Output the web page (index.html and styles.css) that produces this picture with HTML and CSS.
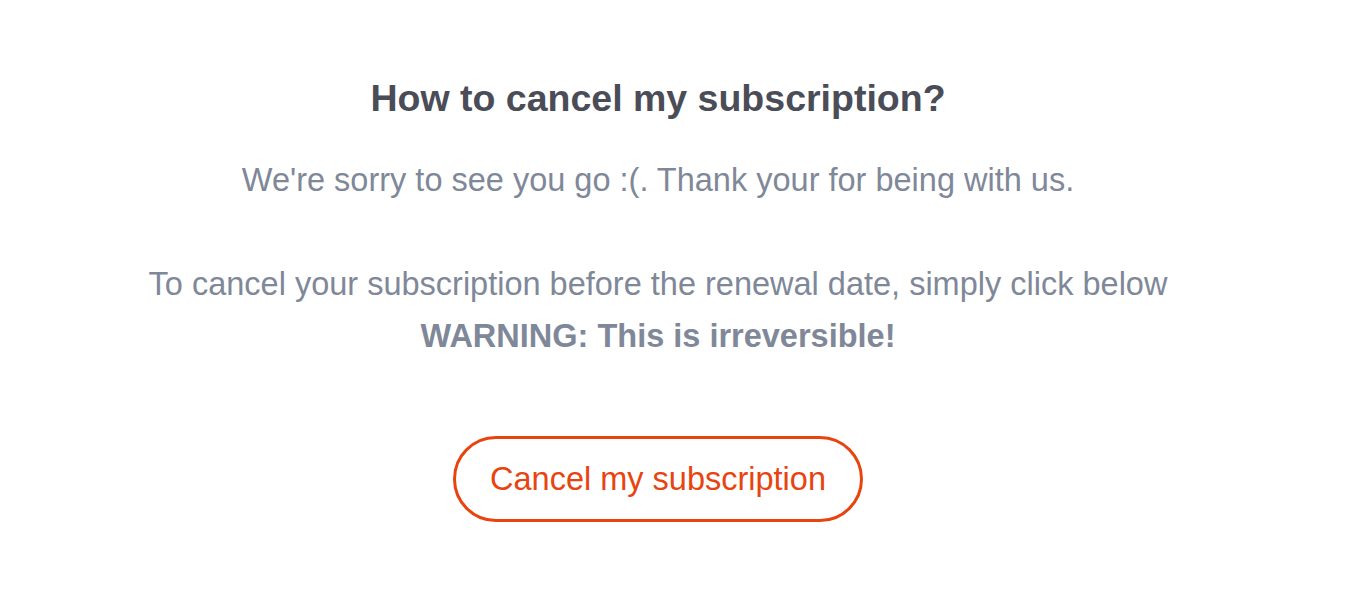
FILE: index.html
```html
<!DOCTYPE html>
<html>
<head>
<meta charset="utf-8">
<link rel="stylesheet" href="styles.css">
</head>
<body>
<main class="page">
  <h1 class="title">How to cancel my subscription?</h1>
  <p class="lead">We're sorry to see you go :(. Thank your for being with us.</p>
  <p class="info">To cancel your subscription before the renewal date, simply click below<br><strong class="warn">WARNING: This is irreversible!</strong></p>
  <div class="actions">
    <button class="cancel-btn" type="button">Cancel my subscription</button>
  </div>
</main>
</body>
</html>
```

FILE: styles.css
```css
body {
  margin: 8px;
  background: #ffffff;
  font-family: "Liberation Sans", Arial, sans-serif;
}
.page {
  width: 1300px;
  display: flex;
  flex-direction: column;
  align-items: center;
  text-align: center;
  padding-top: 70px;
}
.title {
  margin: 0;
  font-size: 37.5px;
  line-height: 40px;
  font-weight: 700;
  color: #4a4d57;
}
.lead {
  margin: 36px 0 0;
  font-size: 32.5px;
  line-height: 52px;
  color: #7f8899;
}
.info {
  margin: 52px 0 0;
  font-size: 32.5px;
  line-height: 52px;
  color: #7f8899;
}
.warn {
  font-weight: 700;
}
.actions {
  margin-top: 74px;
}
.cancel-btn {
  font-family: "Liberation Sans", Arial, sans-serif;
  font-size: 32.5px;
  color: #e8440f;
  background: #ffffff;
  border: 3px solid #e8440f;
  border-radius: 43px;
  height: 86px;
  padding: 0 34.5px;
}
```
